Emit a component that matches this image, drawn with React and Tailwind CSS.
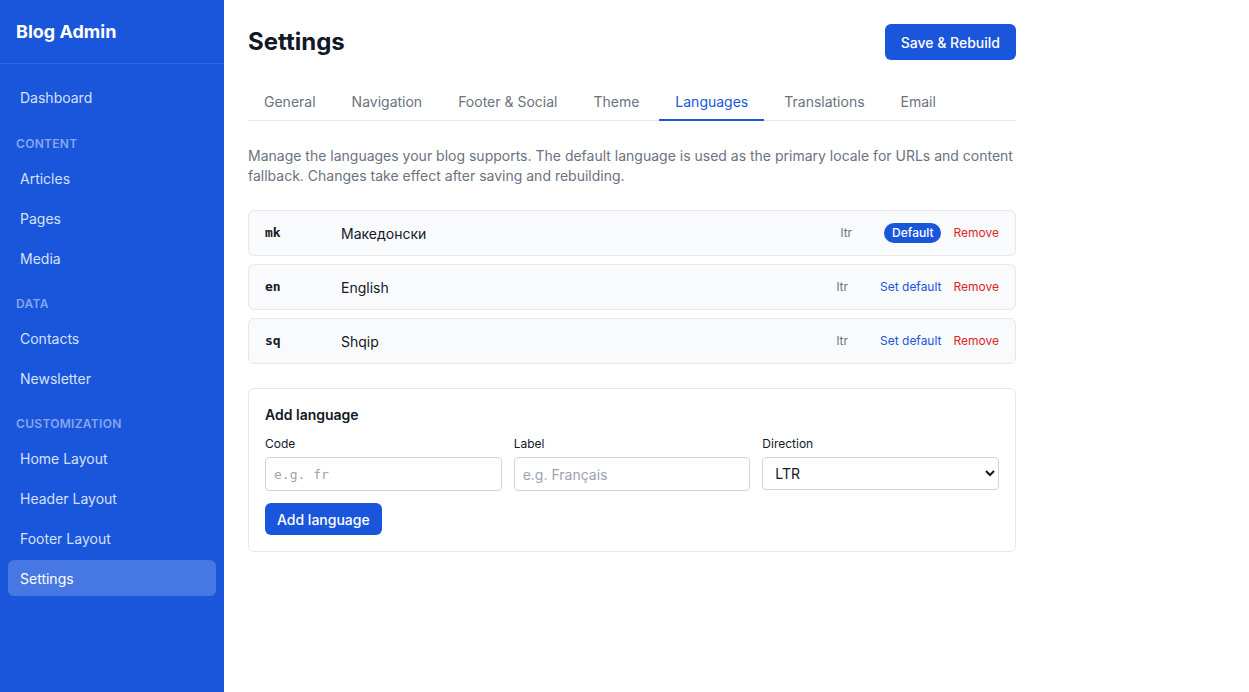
import React from "react";

const Nav = ({ label, active, first }) => (
  <div
    className={`h-9 flex items-center px-3 mx-2 rounded-md text-[14px] ${first ? "mb-[5px]" : "mb-1"} ${
      active ? "bg-white/20 text-white" : "text-[#d6e0fa]"
    }`}
  >
    {label}
  </div>
);

const Section = ({ label }) => (
  <div className="px-4 pt-[16px] pb-[8px] text-[12px] leading-4 font-semibold tracking-wide text-[#86a5ee] uppercase">
    {label}
  </div>
);

const Row = ({ code, label, isDefault }) => (
  <div className="h-[46px] flex items-center px-4 bg-[#f9fafb] border border-[#e5e7eb] rounded-md">
    <div className="w-[76px] text-[13px] font-bold text-[#111827]" style={{ fontFamily: '"DejaVu Sans Mono", monospace' }}>
      {code}
    </div>
    <div className="flex-1 text-[14px] text-[#111827]">{label}</div>
    <div className="text-[12px] text-[#6b7280] mr-8">ltr</div>
    {isDefault ? (
      <span className="bg-[#1a56db] text-white text-[12px] font-medium px-2 h-5 leading-5 rounded-full mr-3">Default</span>
    ) : (
      <span className="text-[#1a56db] text-[12px] mr-3">Set default</span>
    )}
    <span className="text-[#dc2626] text-[12px]">Remove</span>
  </div>
);

export default function App() {
  const tabs = ["General", "Navigation", "Footer & Social", "Theme", "Languages", "Translations", "Email"];
  return (
    <div className="flex min-h-[692px] bg-white" style={{ fontFamily: "Inter, 'Noto Sans', sans-serif" }}>
      <aside className="w-[224px] shrink-0 bg-[#1a56db] text-white">
        <div className="h-16 flex items-center px-4 border-b border-white/10 text-[18px] font-bold">Blog Admin</div>
        <nav className="pt-[15px]">
          <Nav label="Dashboard" first />
          <Section label="Content" />
          <Nav label="Articles" />
          <Nav label="Pages" />
          <Nav label="Media" />
          <Section label="Data" />
          <Nav label="Contacts" />
          <Nav label="Newsletter" />
          <Section label="Customization" />
          <Nav label="Home Layout" />
          <Nav label="Header Layout" />
          <Nav label="Footer Layout" />
          <Nav label="Settings" active />
        </nav>
      </aside>
      <main className="flex-1 px-6 pt-6">
        <div className="w-[768px]">
          <div className="flex items-center justify-between h-9">
            <h1 className="text-[24px] font-bold text-[#111827]">Settings</h1>
            <button className="h-9 px-4 bg-[#1a56db] text-white text-[14px] font-medium rounded-md">Save &amp; Rebuild</button>
          </div>
          <div className="mt-[24px] flex gap-1 border-b border-[#e5e7eb]">
            {tabs.map((t) => (
              <div
                key={t}
                className={`px-4 h-[37px] flex items-center text-[14px] border-b-2 -mb-px ${
                  t === "Languages" ? "border-[#1a56db] text-[#1a56db]" : "border-transparent text-[#6b7280]"
                }`}
              >
                {t}
              </div>
            ))}
          </div>
          <p className="mt-[25px] text-[14px] leading-5 text-[#6b7280]">
            Manage the languages your blog supports. The default language is used as the primary locale for URLs and content fallback. Changes take effect after saving and rebuilding.
          </p>
          <div className="mt-[24px] flex flex-col gap-2">
            <Row code="mk" label="Македонски" isDefault />
            <Row code="en" label="English" />
            <Row code="sq" label="Shqip" />
          </div>
          <div className="mt-6 border border-[#e5e7eb] rounded-md px-4 pt-4 pb-4">
            <div className="text-[14px] leading-5 font-semibold text-[#111827]">Add language</div>
            <div className="mt-[11px] grid grid-cols-3 gap-3">
              <div>
                <div className="text-[12px] leading-4 text-[#111827] mb-[5px]">Code</div>
                <input
                  placeholder="e.g. fr"
                  className="w-full h-[34px] px-2 border border-[#d1d5db] rounded text-[13px] placeholder:text-[#9ca3af]"
                  style={{ fontFamily: '"DejaVu Sans Mono", monospace' }}
                />
              </div>
              <div>
                <div className="text-[12px] leading-4 text-[#111827] mb-[5px]">Label</div>
                <input
                  placeholder="e.g. Français"
                  className="w-full h-[34px] px-2 border border-[#d1d5db] rounded text-[14px] placeholder:text-[#9ca3af]"
                />
              </div>
              <div>
                <div className="text-[12px] leading-4 text-[#111827] mb-[5px]">Direction</div>
                <select className="w-full h-[33px] px-2 border border-[#d1d5db] rounded text-[14px] bg-white text-[#111827]">
                  <option>LTR</option>
                  <option>RTL</option>
                </select>
              </div>
            </div>
            <button className="mt-3 h-8 px-3 bg-[#1a56db] text-white text-[14px] font-medium rounded-md">Add language</button>
          </div>
        </div>
      </main>
    </div>
  );
}
